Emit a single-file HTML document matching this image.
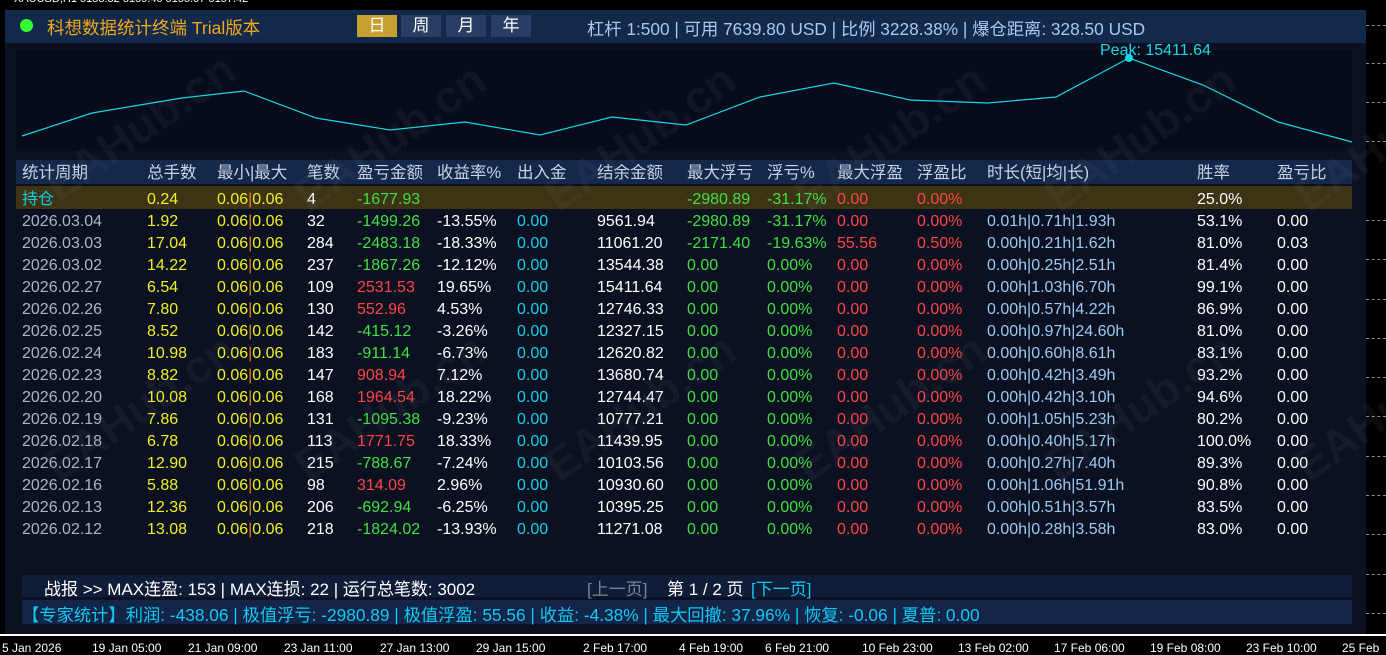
<!DOCTYPE html>
<html><head><meta charset="utf-8">
<style>
*{margin:0;padding:0;box-sizing:border-box}
body{width:1386px;height:651px;background:#000;position:relative;overflow:hidden;font-family:"Liberation Sans","Noto Sans CJK SC",sans-serif;font-size:16px}
.a{position:absolute;white-space:nowrap}
.panel{position:absolute;left:5px;top:10px;width:1361px;height:624px;background:#0b1121}
.hdr{position:absolute;left:5px;top:10px;width:1361px;height:33px;background:#13294b}
.row{position:absolute;left:16px;width:1336px;height:22px;line-height:22px}
.row span{position:absolute;top:0}
.y{color:#f2f020}.g{color:#40e040}.r{color:#ff4545}.c{color:#10d0e8}.w{color:#fff}.d{color:#a8b6cc}.t{color:#9ccaf2}.h{color:#c8d4e6}
.o{color:#e08020}
.wm{position:absolute;color:rgba(120,120,130,0.10);font-size:46px;font-weight:bold;transform:rotate(-35deg);font-family:"Liberation Sans",sans-serif}
.dash{position:absolute;left:1366px;width:20px;border-top:1px dashed #8090a0}
</style></head><body>
<div class="a" style="left:14px;top:-7px;color:#fff;font-size:11px">XAUUSD,H1 5158.32 5159.45 5155.07 5157.42</div>
<div class="dash" style="top:25px"></div><div class="dash" style="top:63px"></div><div class="dash" style="top:102px"></div><div class="dash" style="top:141px"></div><div class="dash" style="top:220px"></div><div class="dash" style="top:259px"></div><div class="dash" style="top:299px"></div><div class="dash" style="top:338px"></div><div class="dash" style="top:377px"></div><div class="dash" style="top:416px"></div><div class="dash" style="top:456px"></div><div class="dash" style="top:495px"></div><div class="dash" style="top:534px"></div><div class="dash" style="top:574px"></div><div class="dash" style="top:613px"></div>
<div class="panel"></div>
<div class="hdr"></div>
<div class="a" style="left:20px;top:19px;width:13px;height:13px;border-radius:50%;background:#30ff30"></div>
<div class="a" style="left:47px;top:15px;color:#f0a818;font-size:17.5px">科想数据统计终端 Trial版本</div>
<div class="a" style="left:357px;top:15px;width:40px;height:22px;background:#c8a030;color:#fff;text-align:center;line-height:22px;font-size:17px">日</div>
<div class="a" style="left:401px;top:15px;width:40px;height:22px;background:#283e62;color:#fff;text-align:center;line-height:22px;font-size:17px">周</div>
<div class="a" style="left:446px;top:15px;width:40px;height:22px;background:#283e62;color:#fff;text-align:center;line-height:22px;font-size:17px">月</div>
<div class="a" style="left:491px;top:15px;width:40px;height:22px;background:#283e62;color:#fff;text-align:center;line-height:22px;font-size:17px">年</div>
<div class="a" style="left:587px;top:15px;color:#a8c8ec;font-size:17.3px">杠杆 1:500 | 可用 7639.80 USD | 比例 3228.38% | 爆仓距离: 328.50 USD</div>
<div class="a" style="left:16px;top:50px;width:1336px;height:101px;background:#070c1a"></div>
<svg class="a" style="left:0;top:0" width="1386" height="160">
<polyline fill="none" stroke="#18d8e8" stroke-width="1.2" points="22,136 92,113 182,98 244,91 316,118 390,130 465,122 540,135 612,117 686,125 760,97 834,83 910,100 988,103 1056,97 1129,58 1203,85 1278,122 1352,142"/>
<circle cx="1129" cy="58" r="4" fill="#18d8e8"/>
</svg>
<div class="a" style="left:1100px;top:42px;color:#18d8e8">Peak: 15411.64</div>
<div class="a" style="left:16px;top:160px;width:1336px;height:24px;background:#14284a"></div>
<div class="a" style="left:16px;top:186px;width:1336px;height:23px;background:#3d3415"></div>
<div class="row h" style="top:161px;line-height:24px;font-size:16.5px"><span style="left:6px">统计周期</span><span style="left:131px">总手数</span><span style="left:201px">最小|最大</span><span style="left:291px">笔数</span><span style="left:341px">盈亏金额</span><span style="left:421px">收益率%</span><span style="left:501px">出入金</span><span style="left:581px">结余金额</span><span style="left:671px">最大浮亏</span><span style="left:751px">浮亏%</span><span style="left:821px">最大浮盈</span><span style="left:901px">浮盈比</span><span style="left:971px">时长(短|均|长)</span><span style="left:1181px">胜率</span><span style="left:1261px">盈亏比</span></div>
<div class="row" style="top:189px"><span class="c" style="left:6px">持仓</span><span class="y" style="left:131px">0.24</span><span class="y" style="left:201px">0.06<i class="o" style="font-style:normal">|</i>0.06</span><span class="w" style="left:291px">4</span><span class="g" style="left:341px">-1677.93</span><span class="g" style="left:671px">-2980.89</span><span class="g" style="left:751px">-31.17%</span><span class="r" style="left:821px">0.00</span><span class="r" style="left:901px">0.00%</span><span class="w" style="left:1181px">25.0%</span></div>
<div class="row" style="top:211px"><span class="d" style="left:6px">2026.03.04</span><span class="y" style="left:131px">1.92</span><span class="y" style="left:201px">0.06<i class="o" style="font-style:normal">|</i>0.06</span><span class="w" style="left:291px">32</span><span class="g" style="left:341px">-1499.26</span><span class="w" style="left:421px">-13.55%</span><span class="c" style="left:501px">0.00</span><span class="w" style="left:581px">9561.94</span><span class="g" style="left:671px">-2980.89</span><span class="g" style="left:751px">-31.17%</span><span class="r" style="left:821px">0.00</span><span class="r" style="left:901px">0.00%</span><span class="t" style="left:971px">0.01h|0.71h|1.93h</span><span class="w" style="left:1181px">53.1%</span><span class="w" style="left:1261px">0.00</span></div>
<div class="row" style="top:233px"><span class="d" style="left:6px">2026.03.03</span><span class="y" style="left:131px">17.04</span><span class="y" style="left:201px">0.06<i class="o" style="font-style:normal">|</i>0.06</span><span class="w" style="left:291px">284</span><span class="g" style="left:341px">-2483.18</span><span class="w" style="left:421px">-18.33%</span><span class="c" style="left:501px">0.00</span><span class="w" style="left:581px">11061.20</span><span class="g" style="left:671px">-2171.40</span><span class="g" style="left:751px">-19.63%</span><span class="r" style="left:821px">55.56</span><span class="r" style="left:901px">0.50%</span><span class="t" style="left:971px">0.00h|0.21h|1.62h</span><span class="w" style="left:1181px">81.0%</span><span class="w" style="left:1261px">0.03</span></div>
<div class="row" style="top:255px"><span class="d" style="left:6px">2026.03.02</span><span class="y" style="left:131px">14.22</span><span class="y" style="left:201px">0.06<i class="o" style="font-style:normal">|</i>0.06</span><span class="w" style="left:291px">237</span><span class="g" style="left:341px">-1867.26</span><span class="w" style="left:421px">-12.12%</span><span class="c" style="left:501px">0.00</span><span class="w" style="left:581px">13544.38</span><span class="g" style="left:671px">0.00</span><span class="g" style="left:751px">0.00%</span><span class="r" style="left:821px">0.00</span><span class="r" style="left:901px">0.00%</span><span class="t" style="left:971px">0.00h|0.25h|2.51h</span><span class="w" style="left:1181px">81.4%</span><span class="w" style="left:1261px">0.00</span></div>
<div class="row" style="top:277px"><span class="d" style="left:6px">2026.02.27</span><span class="y" style="left:131px">6.54</span><span class="y" style="left:201px">0.06<i class="o" style="font-style:normal">|</i>0.06</span><span class="w" style="left:291px">109</span><span class="r" style="left:341px">2531.53</span><span class="w" style="left:421px">19.65%</span><span class="c" style="left:501px">0.00</span><span class="w" style="left:581px">15411.64</span><span class="g" style="left:671px">0.00</span><span class="g" style="left:751px">0.00%</span><span class="r" style="left:821px">0.00</span><span class="r" style="left:901px">0.00%</span><span class="t" style="left:971px">0.00h|1.03h|6.70h</span><span class="w" style="left:1181px">99.1%</span><span class="w" style="left:1261px">0.00</span></div>
<div class="row" style="top:299px"><span class="d" style="left:6px">2026.02.26</span><span class="y" style="left:131px">7.80</span><span class="y" style="left:201px">0.06<i class="o" style="font-style:normal">|</i>0.06</span><span class="w" style="left:291px">130</span><span class="r" style="left:341px">552.96</span><span class="w" style="left:421px">4.53%</span><span class="c" style="left:501px">0.00</span><span class="w" style="left:581px">12746.33</span><span class="g" style="left:671px">0.00</span><span class="g" style="left:751px">0.00%</span><span class="r" style="left:821px">0.00</span><span class="r" style="left:901px">0.00%</span><span class="t" style="left:971px">0.00h|0.57h|4.22h</span><span class="w" style="left:1181px">86.9%</span><span class="w" style="left:1261px">0.00</span></div>
<div class="row" style="top:321px"><span class="d" style="left:6px">2026.02.25</span><span class="y" style="left:131px">8.52</span><span class="y" style="left:201px">0.06<i class="o" style="font-style:normal">|</i>0.06</span><span class="w" style="left:291px">142</span><span class="g" style="left:341px">-415.12</span><span class="w" style="left:421px">-3.26%</span><span class="c" style="left:501px">0.00</span><span class="w" style="left:581px">12327.15</span><span class="g" style="left:671px">0.00</span><span class="g" style="left:751px">0.00%</span><span class="r" style="left:821px">0.00</span><span class="r" style="left:901px">0.00%</span><span class="t" style="left:971px">0.00h|0.97h|24.60h</span><span class="w" style="left:1181px">81.0%</span><span class="w" style="left:1261px">0.00</span></div>
<div class="row" style="top:343px"><span class="d" style="left:6px">2026.02.24</span><span class="y" style="left:131px">10.98</span><span class="y" style="left:201px">0.06<i class="o" style="font-style:normal">|</i>0.06</span><span class="w" style="left:291px">183</span><span class="g" style="left:341px">-911.14</span><span class="w" style="left:421px">-6.73%</span><span class="c" style="left:501px">0.00</span><span class="w" style="left:581px">12620.82</span><span class="g" style="left:671px">0.00</span><span class="g" style="left:751px">0.00%</span><span class="r" style="left:821px">0.00</span><span class="r" style="left:901px">0.00%</span><span class="t" style="left:971px">0.00h|0.60h|8.61h</span><span class="w" style="left:1181px">83.1%</span><span class="w" style="left:1261px">0.00</span></div>
<div class="row" style="top:365px"><span class="d" style="left:6px">2026.02.23</span><span class="y" style="left:131px">8.82</span><span class="y" style="left:201px">0.06<i class="o" style="font-style:normal">|</i>0.06</span><span class="w" style="left:291px">147</span><span class="r" style="left:341px">908.94</span><span class="w" style="left:421px">7.12%</span><span class="c" style="left:501px">0.00</span><span class="w" style="left:581px">13680.74</span><span class="g" style="left:671px">0.00</span><span class="g" style="left:751px">0.00%</span><span class="r" style="left:821px">0.00</span><span class="r" style="left:901px">0.00%</span><span class="t" style="left:971px">0.00h|0.42h|3.49h</span><span class="w" style="left:1181px">93.2%</span><span class="w" style="left:1261px">0.00</span></div>
<div class="row" style="top:387px"><span class="d" style="left:6px">2026.02.20</span><span class="y" style="left:131px">10.08</span><span class="y" style="left:201px">0.06<i class="o" style="font-style:normal">|</i>0.06</span><span class="w" style="left:291px">168</span><span class="r" style="left:341px">1964.54</span><span class="w" style="left:421px">18.22%</span><span class="c" style="left:501px">0.00</span><span class="w" style="left:581px">12744.47</span><span class="g" style="left:671px">0.00</span><span class="g" style="left:751px">0.00%</span><span class="r" style="left:821px">0.00</span><span class="r" style="left:901px">0.00%</span><span class="t" style="left:971px">0.00h|0.42h|3.10h</span><span class="w" style="left:1181px">94.6%</span><span class="w" style="left:1261px">0.00</span></div>
<div class="row" style="top:409px"><span class="d" style="left:6px">2026.02.19</span><span class="y" style="left:131px">7.86</span><span class="y" style="left:201px">0.06<i class="o" style="font-style:normal">|</i>0.06</span><span class="w" style="left:291px">131</span><span class="g" style="left:341px">-1095.38</span><span class="w" style="left:421px">-9.23%</span><span class="c" style="left:501px">0.00</span><span class="w" style="left:581px">10777.21</span><span class="g" style="left:671px">0.00</span><span class="g" style="left:751px">0.00%</span><span class="r" style="left:821px">0.00</span><span class="r" style="left:901px">0.00%</span><span class="t" style="left:971px">0.00h|1.05h|5.23h</span><span class="w" style="left:1181px">80.2%</span><span class="w" style="left:1261px">0.00</span></div>
<div class="row" style="top:431px"><span class="d" style="left:6px">2026.02.18</span><span class="y" style="left:131px">6.78</span><span class="y" style="left:201px">0.06<i class="o" style="font-style:normal">|</i>0.06</span><span class="w" style="left:291px">113</span><span class="r" style="left:341px">1771.75</span><span class="w" style="left:421px">18.33%</span><span class="c" style="left:501px">0.00</span><span class="w" style="left:581px">11439.95</span><span class="g" style="left:671px">0.00</span><span class="g" style="left:751px">0.00%</span><span class="r" style="left:821px">0.00</span><span class="r" style="left:901px">0.00%</span><span class="t" style="left:971px">0.00h|0.40h|5.17h</span><span class="w" style="left:1181px">100.0%</span><span class="w" style="left:1261px">0.00</span></div>
<div class="row" style="top:453px"><span class="d" style="left:6px">2026.02.17</span><span class="y" style="left:131px">12.90</span><span class="y" style="left:201px">0.06<i class="o" style="font-style:normal">|</i>0.06</span><span class="w" style="left:291px">215</span><span class="g" style="left:341px">-788.67</span><span class="w" style="left:421px">-7.24%</span><span class="c" style="left:501px">0.00</span><span class="w" style="left:581px">10103.56</span><span class="g" style="left:671px">0.00</span><span class="g" style="left:751px">0.00%</span><span class="r" style="left:821px">0.00</span><span class="r" style="left:901px">0.00%</span><span class="t" style="left:971px">0.00h|0.27h|7.40h</span><span class="w" style="left:1181px">89.3%</span><span class="w" style="left:1261px">0.00</span></div>
<div class="row" style="top:475px"><span class="d" style="left:6px">2026.02.16</span><span class="y" style="left:131px">5.88</span><span class="y" style="left:201px">0.06<i class="o" style="font-style:normal">|</i>0.06</span><span class="w" style="left:291px">98</span><span class="r" style="left:341px">314.09</span><span class="w" style="left:421px">2.96%</span><span class="c" style="left:501px">0.00</span><span class="w" style="left:581px">10930.60</span><span class="g" style="left:671px">0.00</span><span class="g" style="left:751px">0.00%</span><span class="r" style="left:821px">0.00</span><span class="r" style="left:901px">0.00%</span><span class="t" style="left:971px">0.00h|1.06h|51.91h</span><span class="w" style="left:1181px">90.8%</span><span class="w" style="left:1261px">0.00</span></div>
<div class="row" style="top:497px"><span class="d" style="left:6px">2026.02.13</span><span class="y" style="left:131px">12.36</span><span class="y" style="left:201px">0.06<i class="o" style="font-style:normal">|</i>0.06</span><span class="w" style="left:291px">206</span><span class="g" style="left:341px">-692.94</span><span class="w" style="left:421px">-6.25%</span><span class="c" style="left:501px">0.00</span><span class="w" style="left:581px">10395.25</span><span class="g" style="left:671px">0.00</span><span class="g" style="left:751px">0.00%</span><span class="r" style="left:821px">0.00</span><span class="r" style="left:901px">0.00%</span><span class="t" style="left:971px">0.00h|0.51h|3.57h</span><span class="w" style="left:1181px">83.5%</span><span class="w" style="left:1261px">0.00</span></div>
<div class="row" style="top:519px"><span class="d" style="left:6px">2026.02.12</span><span class="y" style="left:131px">13.08</span><span class="y" style="left:201px">0.06<i class="o" style="font-style:normal">|</i>0.06</span><span class="w" style="left:291px">218</span><span class="g" style="left:341px">-1824.02</span><span class="w" style="left:421px">-13.93%</span><span class="c" style="left:501px">0.00</span><span class="w" style="left:581px">11271.08</span><span class="g" style="left:671px">0.00</span><span class="g" style="left:751px">0.00%</span><span class="r" style="left:821px">0.00</span><span class="r" style="left:901px">0.00%</span><span class="t" style="left:971px">0.00h|0.28h|3.58h</span><span class="w" style="left:1181px">83.0%</span><span class="w" style="left:1261px">0.00</span></div>
<div class="a" style="left:22px;top:575px;width:1330px;height:22px;background:#0f1d38"></div>
<div class="a" style="left:44px;top:575px;color:#fff;font-size:17px">战报 &gt;&gt; MAX连盈: 153 | MAX连损: 22 | 运行总笔数: 3002</div>
<div class="a" style="left:587px;top:575px;color:#7a8494;font-size:17px">[上一页]</div>
<div class="a" style="left:667px;top:575px;color:#fff;font-size:17px">第 1 / 2 页</div>
<div class="a" style="left:751px;top:575px;color:#10c8f0;font-size:17px">[下一页]</div>
<div class="a" style="left:22px;top:600px;width:1330px;height:24px;background:#13264a"></div>
<div class="a" style="left:22px;top:601px;color:#10c8f0;font-size:17.3px">【专家统计】利润: -438.06 | 极值浮亏: -2980.89 | 极值浮盈: 55.56 | 收益: -4.38% | 最大回撤: 37.96% | 恢复: -0.06 | 夏普: 0.00</div>
<div class="a" style="left:0;top:634px;width:1386px;height:2px;background:#fff"></div>
<div class="a" style="left:0;top:641px;color:#fff;font-size:12px">
<span class="a" style="left:2px">5 Jan 2026</span><span class="a" style="left:92px">19 Jan 05:00</span><span class="a" style="left:188px">21 Jan 09:00</span><span class="a" style="left:284px">23 Jan 11:00</span><span class="a" style="left:380px">27 Jan 13:00</span><span class="a" style="left:476px">29 Jan 15:00</span><span class="a" style="left:583px">2 Feb 17:00</span><span class="a" style="left:679px">4 Feb 19:00</span><span class="a" style="left:765px">6 Feb 21:00</span><span class="a" style="left:862px">10 Feb 23:00</span><span class="a" style="left:958px">13 Feb 02:00</span><span class="a" style="left:1054px">17 Feb 06:00</span><span class="a" style="left:1150px">19 Feb 08:00</span><span class="a" style="left:1246px">23 Feb 10:00</span><span class="a" style="left:1342px">25 Feb</span></div>
<div class="wm" style="left:30px;top:100px">EAHub.cn</div>
<div class="wm" style="left:280px;top:110px">EAHub.cn</div>
<div class="wm" style="left:530px;top:110px">EAHub.cn</div>
<div class="wm" style="left:780px;top:110px">EAHub.cn</div>
<div class="wm" style="left:1030px;top:110px">EAHub.cn</div>
<div class="wm" style="left:1280px;top:110px">EAHub.cn</div>
<div class="wm" style="left:30px;top:380px">EAHub.cn</div>
<div class="wm" style="left:280px;top:380px">EAHub.cn</div>
<div class="wm" style="left:530px;top:380px">EAHub.cn</div>
<div class="wm" style="left:780px;top:380px">EAHub.cn</div>
<div class="wm" style="left:1030px;top:380px">EAHub.cn</div>
<div class="wm" style="left:1280px;top:380px">EAHub.cn</div>
</body></html>
